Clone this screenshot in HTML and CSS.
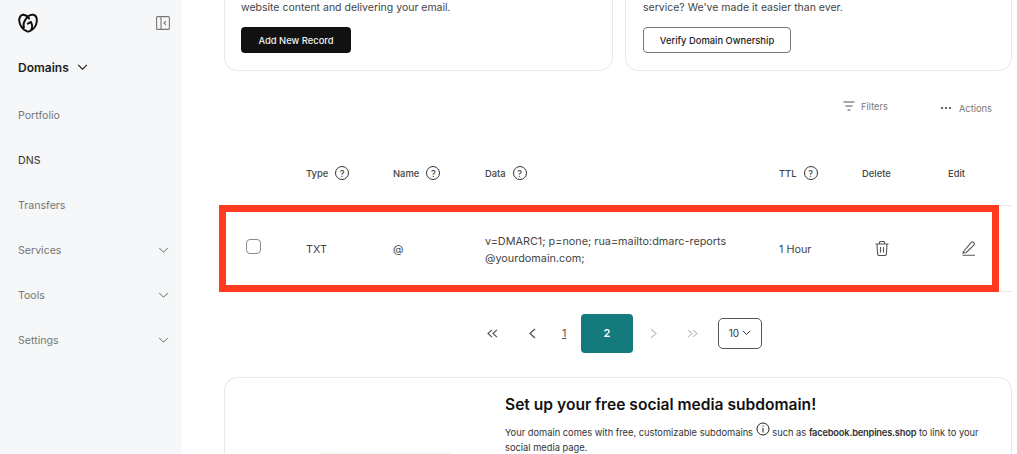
FILE: index.html
```html
<!DOCTYPE html>
<html lang="en">
<head>
<meta charset="utf-8">
<title>DNS records</title>
<link rel="stylesheet" href="styles.css">
</head>
<body>
<div class="app">
  <aside class="sidebar">
    <div class="brand">
      <svg class="logo" viewBox="0 0 20 20" width="20" height="20" fill="none" stroke="#111" stroke-width="2" stroke-linecap="round" stroke-linejoin="round"><path d="M5.500 1.800C3 1.600 1 4 1.200 7.500c.2 4.800 3.700 9.300 7.600 10.700 1 .3 2 .3 3-.1 3.800-1.500 6.700-5.700 7-9.800.2-3.500-1.200-6-3.500-6.500-2.800-.5-6.300 1.900-8.400 5.600-1.400 2.500-1.700 5-.9 6.800"/><path d="M5.500 1.800c2.100.2 4.300 1.600 5.600 3.800"/><path d="M9.800 10.600l3.200-1.600 1.100 3.300c.3 1.500 0 3-.8 4.300"/></svg>
      <svg class="collapse" viewBox="0 0 14 14" width="14" height="14" fill="none" stroke="#777" stroke-width="1.100"><rect x=".6" y=".6" width="12.800" height="12.800" rx="1"/><path d="M5 .6v12.800M10 5.200L8 7l2 1.800"/></svg>
    </div>
    <div class="nav-head"><span>Domains</span><svg viewBox="0 0 12 8" width="11" height="7" fill="none" stroke="#222" stroke-width="1.300"><path d="M1 1l5 5 5-5"/></svg></div>
    <nav class="nav">
      <a class="nav-item">Portfolio</a>
      <a class="nav-item current">DNS</a>
      <a class="nav-item">Transfers</a>
      <a class="nav-item">Services<svg viewBox="0 0 12 8" width="11" height="7" fill="none" stroke="#666" stroke-width="1.100"><path d="M1 1l5 5 5-5"/></svg></a>
      <a class="nav-item">Tools<svg viewBox="0 0 12 8" width="11" height="7" fill="none" stroke="#666" stroke-width="1.100"><path d="M1 1l5 5 5-5"/></svg></a>
      <a class="nav-item">Settings<svg viewBox="0 0 12 8" width="11" height="7" fill="none" stroke="#666" stroke-width="1.100"><path d="M1 1l5 5 5-5"/></svg></a>
    </nav>
  </aside>
  <main class="main">
    <section class="cards">
      <div class="card card-first">
        <p>website content and delivering your email.</p>
        <button class="btn btn-dark">Add New Record</button>
      </div>
      <div class="card">
        <p>service? We've made it easier than ever.</p>
        <button class="btn btn-light">Verify Domain Ownership</button>
      </div>
    </section>
    <div class="toolbar">
      <span class="tool tool-filter"><svg viewBox="0 0 12 10" width="12" height="10" fill="none" stroke="#555" stroke-width="1"><path d="M.5 1h11M2.500 5h7M4.500 9h3"/></svg>Filters</span>
      <span class="tool tool-actions"><svg viewBox="0 0 12 4" width="12" height="4" fill="#444"><circle cx="2" cy="2" r="1.100"/><circle cx="6" cy="2" r="1.100"/><circle cx="10" cy="2" r="1.100"/></svg>Actions</span>
    </div>
    <div class="table-head">
      <span></span>
      <span class="th">Type<i class="help">?</i></span>
      <span class="th">Name<i class="help">?</i></span>
      <span class="th">Data<i class="help">?</i></span>
      <span class="th">TTL<i class="help">?</i></span>
      <span class="th">Delete</span>
      <span class="th">Edit</span>
    </div>
    <div class="table-row">
      <span class="check"></span>
      <span>TXT</span>
      <span>@</span>
      <span class="data">v=DMARC1; p=none; rua=mailto:dmarc-reports<br>@yourdomain.com;</span>
      <span>1 Hour</span>
      <span class="icon-cell"><svg viewBox="0 0 14 15" width="14" height="15" fill="none" stroke="#555" stroke-width="1.100"><path d="M.5 3h13M4.500 3V1.500q0-1 1-1h3q1 0 1 1V3M2 3l.6 10q.1 1.500 1.500 1.500h5.800q1.400 0 1.500-1.500L12 3M5.500 6v5.500M8.500 6v5.500"/></svg></span>
      <span class="icon-cell icon-edit"><svg viewBox="0 0 14 15" width="14" height="15" fill="none" stroke="#555" stroke-width="1.100"><path d="M1.500 10.500L9.500 1.200q.8-.8 1.700 0l.9.9q.8.9 0 1.700L4.300 11.500 1 12zM.5 14.300h12.500"/></svg></span>
      <div class="highlight"></div>
    </div>
    <div class="pager">
      <svg class="pg pg-first" viewBox="0 0 12 10" width="11" height="9" fill="none" stroke="#555" stroke-width="1.300"><path d="M5.500 1L1 5l4.500 4M11 1L6.500 5l4.500 4"/></svg>
      <svg class="pg pg-prev" viewBox="0 0 7 11" width="7" height="11" fill="none" stroke="#555" stroke-width="1.300"><path d="M6 1L1 5.500 6 10"/></svg>
      <a class="pg-link">1</a>
      <span class="pg-current">2</span>
      <svg class="pg pg-next" viewBox="0 0 7 11" width="7" height="11" fill="none" stroke="#c4c4c4" stroke-width="1.300"><path d="M1 1l5 4.500L1 10"/></svg>
      <svg class="pg pg-last" viewBox="0 0 12 10" width="11" height="9" fill="none" stroke="#c4c4c4" stroke-width="1.300"><path d="M1 1l4.500 4L1 9M6.500 1L11 5l-4.500 4"/></svg>
      <span class="pg-size">10<svg viewBox="0 0 12 8" width="9" height="6" fill="none" stroke="#333" stroke-width="1.300"><path d="M1 1l5 5 5-5"/></svg></span>
    </div>
    <section class="promo">
      <div class="promo-art"><div class="promo-shape"></div></div>
      <div class="promo-body">
        <h2>Set up your free social media subdomain!</h2>
        <p><span>Your domain comes with free, customizable subdomains</span> <svg class="info" viewBox="0 0 14 14" width="14" height="14" fill="none" stroke="#222" stroke-width="1"><circle cx="7" cy="7" r="6"/><path d="M7 6v4.500M7 3.500v1.200"/></svg> <span>such as</span> <b>facebook.benpines.shop</b> <span>to link to your</span><br><span>social media page.</span></p>
      </div>
    </section>
  </main>
</div>
</body>
</html>
```
FILE: styles.css
```css
* { box-sizing: border-box; }
html, body { margin: 0; height: 454px; overflow: hidden; }
body { font-family: "Inter", "Liberation Sans", sans-serif; background: #fff; color: #333; font-size: 11px; }
.app { display: flex; height: 454px; overflow: hidden; }

.sidebar { width: 182px; flex: none; background: #f5f7f8; padding: 13px 13px 0 18px; }
.brand { display: flex; justify-content: space-between; align-items: center; height: 18px; }
.logo { margin-top: 1px; }
.collapse { margin-top: 1px; margin-right: -1px; }
.nav-head { display: flex; align-items: center; gap: 8px; margin-top: 27px; height: 18px; font-size: 12px; font-weight: 600; color: #222; }
.nav { display: flex; flex-direction: column; margin-top: 17px; }
.nav-item { display: flex; justify-content: space-between; align-items: center; height: 45px; font-size: 10.600px; color: #767676; }
.nav-item.current { color: #333; }

.main { flex: 1; min-width: 0; padding: 0 5px 0 42px; }
.cards { display: grid; grid-template-columns: 389px 387px; column-gap: 12px; }
.card { height: 71px; padding: 0 17px; background: #fff; border: 1px solid #e6e8ea; border-top: 0; border-radius: 0 0 14px 14px; }
.card-first { padding: 0 16px; }
.card p { margin: 0; height: 27px; padding-top: 1px; line-height: 14px; font-size: 10.500px; color: #444; }
.btn { display: block; height: 26px; border-radius: 4px; font: 500 9.400px "Inter", "Liberation Sans", sans-serif; padding: 0; }
.btn-dark { width: 110px; background: #111; color: #f2f2f2; border: 0; }
.btn-light { width: 148px; background: #fff; color: #222; border: 1px solid #777; }

.toolbar { display: flex; height: 70px; padding-top: 28px; font-size: 9.300px; color: #777; }
.tool { display: flex; align-items: center; height: 14px; }
.tool-filter { gap: 6px; margin-left: 619px; }
.tool-actions { gap: 7px; margin-left: 52px; margin-top: 2px; }

.table-head, .table-row { display: grid; grid-template-columns: 82px 87px 92px 294px 83px 86px 64px; align-items: center; }
.table-head { height: 64px; font-size: 9.400px; font-weight: 500; color: #444; }
.th { display: inline-flex; align-items: center; gap: 7px; }
.help { display: inline-flex; justify-content: center; align-items: center; width: 14px; height: 14px; border: 1px solid #333; border-radius: 50%; font-style: normal; font-size: 9px; line-height: 1; color: #333; }
.table-row { position: relative; height: 87px; padding-top: 1px; font-size: 10.800px; color: #444; border-top: 1px solid #e6e8ea; border-bottom: 1px solid #e6e8ea; }
.check { width: 15px; height: 15px; margin: 0 0 5px 22px; border: 1px solid #8a8a8a; border-radius: 4px; background: #fff; }
.data { line-height: 17px; font-size: 10.850px; margin-top: 2px; }
.icon-cell { display: flex; padding-left: 13px; margin-bottom: 1px; }
.icon-edit { padding-left: 14px; }
.highlight { position: absolute; left: -5px; right: 13px; top: -1px; bottom: -1px; border: 7px solid #ff3a1f; }

.pager { display: flex; align-items: center; height: 40px; margin-top: 21px; padding-left: 263px; font-size: 11px; color: #555; }
.pg { flex: none; }
.pg-prev { margin-left: 31px; }
.pg-link { width: 8px; margin-left: 26px; margin-right: 11px; text-decoration: underline; }
.pg-current { display: flex; justify-content: center; align-items: center; width: 52px; height: 39px; background: #147a7c; color: #fff; border-radius: 4px; font-weight: 600; }
.pg-next { margin-left: 17px; }
.pg-last { margin-left: 30px; }
.pg-size { display: flex; align-items: center; justify-content: center; gap: 3px; width: 44px; height: 31px; margin-left: 20px; border: 1px solid #555; border-radius: 5px; font-size: 10px; color: #333; }

.promo { display: flex; height: 100px; margin-top: 24px; border: 1px solid #e6e8ea; border-bottom: 0; border-radius: 14px 14px 0 0; }
.promo-art { width: 280px; flex: none; padding: 74px 0 0 94px; }
.promo-shape { width: 133px; height: 4px; background: #f4f5f6; border-radius: 4px 4px 0 0; }
.promo-body { flex: 1; padding-top: 17px; }
.promo-body h2 { margin: 0; font-size: 15.600px; line-height: 20px; font-weight: 600; color: #111; }
.promo-body p { margin: 7px 0 0; font-size: 9.300px; line-height: 15px; color: #333; }
.promo-body b { font-weight: 600; letter-spacing: -0.2px; }
.info { vertical-align: 0; }
```
